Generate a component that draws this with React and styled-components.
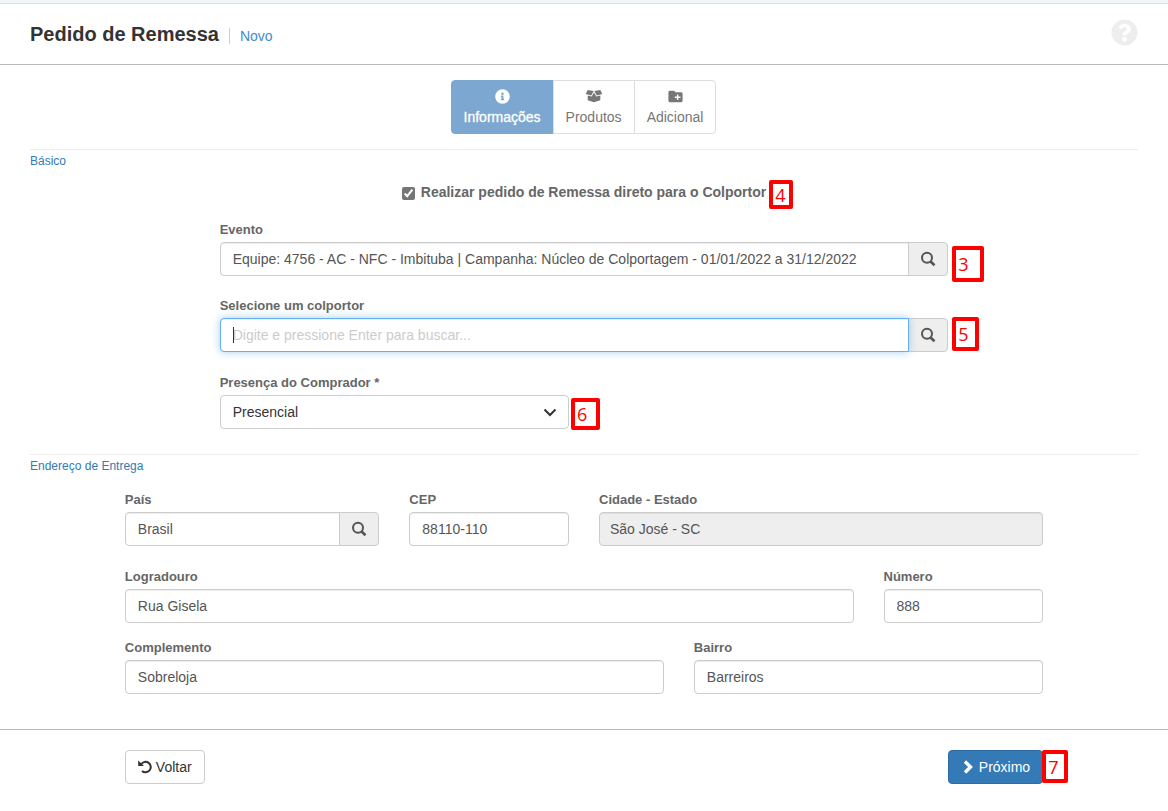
import React, { useState } from 'react';
import styled, { createGlobalStyle, css } from 'styled-components';
import { FaInfoCircle, FaQuestionCircle } from 'react-icons/fa';
import { MdCreateNewFolder } from 'react-icons/md';

const GlobalStyle = createGlobalStyle`
  * {
    box-sizing: border-box;
  }
  body {
    margin: 0;
    background: #fff;
    color: #555;
    font: 14px/20px "Liberation Sans", Arial, sans-serif;
  }
  input, select, button {
    font: inherit;
  }
`;

const Page = styled.div`
  border-top: 3px solid #f2f6f9;
`;

const Header = styled.header`
  display: flex;
  align-items: center;
  height: 62px;
  padding: 0 30px;
  border-top: 1px solid #ddd;
  border-bottom: 1px solid #bbb;
`;

const Title = styled.h1`
  margin: 0;
  color: #333;
  font-size: 20px;
  line-height: 24px;
`;

const SubTitle = styled.a`
  margin: 4px 0 0 10px;
  padding-left: 10px;
  border-left: 1px solid #ccc;
  color: #428bca;
  line-height: 16px;
  text-decoration: none;
`;

const HelpButton = styled.button`
  display: flex;
  margin: 0 0 4px auto;
  padding: 0;
  border: 0;
  background: none;
  color: #eee;
  font-size: 27px;
`;

const Tabs = styled.nav`
  display: flex;
  justify-content: center;
  padding: 15px 0;
`;

const Tab = styled.button`
  display: flex;
  flex-direction: column;
  align-items: center;
  gap: 2px;
  height: 54px;
  margin-left: -1px;
  padding: 6px 12px;
  border: 1px solid #ddd;
  background: #fff;
  color: #777;

  &:first-child {
    border-radius: 4px 0 0 4px;
  }
  &:last-child {
    border-radius: 0 4px 4px 0;
  }
  ${props => props.$active && css`
    border-color: #7ba7d0;
    background: #7ba7d0;
    color: #fff;
    -webkit-text-stroke: 0.3px #fff;
  `}
`;

const TabIcon = styled.span`
  display: flex;
  flex: none;
  align-items: center;
  height: 18px;
`;

const Section = styled.section`
  margin: 0 30px;
  border-top: 1px solid #eee;
`;

const SectionTitle = styled.h2`
  margin: 0;
  color: #337ab7;
  font-size: 12px;
  font-weight: normal;
  line-height: 22px;
`;

const CheckRow = styled.div`
  display: flex;
  justify-content: center;
  margin: 10px 0 17px;
`;

const CheckLabel = styled.label`
  position: relative;
  display: flex;
  align-items: center;
  gap: 6px;
  color: #666;
  font-weight: bold;

  input {
    width: 13px;
    height: 13px;
    margin: 3px 0 0;
    accent-color: #757575;
  }
`;

const Row = styled.div`
  display: grid;
  grid-template-columns: repeat(12, 1fr);
  column-gap: 30px;
  margin-bottom: ${props => props.$gap || 19}px;
`;

const AddressRows = styled.div`
  padding-top: 12px;
`;

const Col = styled.div`
  position: relative;
  grid-column: ${props => props.$start} / span ${props => props.$span};
`;

const Label = styled.label`
  display: block;
  margin-bottom: 1px;
  color: #666;
  font-size: 13px;
  font-weight: bold;
  line-height: 22px;
`;

const Group = styled.div`
  position: relative;
  display: flex;
`;

const control = css`
  width: 100%;
  min-width: 0;
  height: 34px;
  padding: 6px 12px;
  border: 1px solid #ccc;
  border-radius: 4px;
  background: #fff;
  color: #555;
`;

const Input = styled.input`
  ${control}
  box-shadow: inset 0 1px 1px rgba(0, 0, 0, 0.075);

  ${Group} & {
    border-radius: 4px 0 0 4px;
  }
  &::placeholder {
    color: #ccc;
  }
  &:disabled {
    padding-left: 10px;
    background: #eee;
  }
  &:focus {
    z-index: 1;
    border-color: #66afe9;
    outline: 0;
    box-shadow: inset 0 1px 1px rgba(0, 0, 0, 0.075), 0 0 8px rgba(102, 175, 233, 0.6);
  }
`;

const Caret = styled.span`
  position: absolute;
  top: 9px;
  left: 13px;
  z-index: 2;
  width: 1px;
  height: 16px;
  background: #333;
  pointer-events: none;
`;

const SearchButton = styled.button`
  display: flex;
  flex: none;
  align-items: center;
  justify-content: center;
  width: 40px;
  margin-left: -1px;
  padding: 0;
  border: 1px solid #ccc;
  border-radius: 0 4px 4px 0;
  background: #eee;
  color: #555;
`;

const Select = styled.select`
  ${control}
  appearance: none;
  color: #333;
`;

const Arrow = styled.svg`
  position: absolute;
  top: 13px;
  right: 12px;
  pointer-events: none;
`;

const Footer = styled.footer`
  padding: 20px 30px 8px;
  border-top: 1px solid #bbb;
`;

const Actions = styled.div`
  position: relative;
  grid-column: 2 / span 10;
  display: flex;
  justify-content: space-between;
`;

const Button = styled.button`
  display: flex;
  align-items: center;
  gap: 4px;
  height: 34px;
  padding: 6px 12px;
  border: 1px solid ${props => (props.$primary ? '#2e6da4' : '#ccc')};
  border-radius: 4px;
  background: ${props => (props.$primary ? '#337ab7' : '#fff')};
  color: ${props => (props.$primary ? '#fff' : '#333')};
`;

const Marker = styled.span`
  position: absolute;
  top: ${props => props.$top}px;
  left: calc(100% + ${props => props.$left}px);
  display: flex;
  align-items: center;
  width: ${props => props.$width}px;
  height: ${props => props.$height}px;
  padding-left: 2px;
  border: 4px solid #f00;
  border-radius: 2px;
  background: #fff;
  color: #f00;
  font: 400 18px/22px "Open Sans", "Noto Sans", sans-serif;
`;

const BoxIcon = () => (
  <svg width="18" height="14" viewBox="0 0 17 14" fill="currentColor">
    <path d="M2.2 1L8.2 1.9L5.7 6.6L0.2 5.1Z" />
    <path d="M14.8 1L8.8 1.9L11.3 6.6L16.8 5.1Z" />
    <path d="M2.2 6.5L6.2 7.6L8.5 3.4L10.8 7.6L14.8 6.5V11.3L8.5 13.2L2.2 11.3Z" />
  </svg>
);

const SearchIcon = () => (
  <svg width="16" height="16" viewBox="0 0 16 16" fill="none" stroke="currentColor">
    <circle cx="7" cy="6.7" r="5" strokeWidth="2" />
    <path d="M10.3 10.2L14.5 14.2" strokeWidth="2.6" />
  </svg>
);

const SearchField = ({ id, label, marker, caret, ...rest }) => {
  const [value, setValue] = useState(rest.defaultValue || '');
  const [focused, setFocused] = useState(!!rest.autoFocus);

  return (
    <>
      <Label htmlFor={id}>{label}</Label>
      <Group>
        <Input
          id={id}
          {...rest}
          style={caret && !value ? { caretColor: 'transparent' } : undefined}
          onChange={evt => setValue(evt.target.value)}
          onFocus={() => setFocused(true)}
          onBlur={() => setFocused(false)}
        />
        {caret && focused && !value && <Caret />}
        <SearchButton type="button" aria-label={`Buscar ${label}`}>
          <SearchIcon />
        </SearchButton>
        {marker}
      </Group>
    </>
  );
};

const Field = ({ id, label, ...rest }) => (
  <>
    <Label htmlFor={id}>{label}</Label>
    <Input id={id} {...rest} />
  </>
);

const TABS = [
  { name: 'Informações', icon: <FaInfoCircle size={15} /> },
  { name: 'Produtos', icon: <BoxIcon /> },
  { name: 'Adicional', icon: <MdCreateNewFolder size={17} /> },
];

function App() {
  const [tab, setTab] = useState('Informações');

  return (
    <Page>
      <GlobalStyle />
      <Header>
        <Title>Pedido de Remessa</Title>
        <SubTitle href="#novo">Novo</SubTitle>
        <HelpButton type="button" aria-label="Ajuda">
          <FaQuestionCircle />
        </HelpButton>
      </Header>
      <Tabs>
        {TABS.map(({ name, icon }) => (
          <Tab key={name} type="button" $active={tab === name} onClick={() => setTab(name)}>
            <TabIcon>{icon}</TabIcon>
            {name}
          </Tab>
        ))}
      </Tabs>

      <Section>
        <SectionTitle>Básico</SectionTitle>
        <CheckRow>
          <CheckLabel>
            <input type="checkbox" defaultChecked />
            Realizar pedido de Remessa direto para o Colportor
            <Marker $top={-2} $left={3} $width={24} $height={29}>4</Marker>
          </CheckLabel>
        </CheckRow>
        <Row>
          <Col $start={3} $span={8}>
            <SearchField
              id="evento"
              label="Evento"
              defaultValue="Equipe: 4756 - AC - NFC - Imbituba | Campanha: Núcleo de Colportagem - 01/01/2022 a 31/12/2022"
              marker={<Marker $top={4} $left={4} $width={32} $height={36}>3</Marker>}
            />
          </Col>
        </Row>
        <Row $gap={20}>
          <Col $start={3} $span={8}>
            <SearchField
              id="colportor"
              label="Selecione um colportor"
              placeholder="Digite e pressione Enter para buscar..."
              autoFocus
              caret
              marker={<Marker $top={-1} $left={4} $width={27} $height={34}>5</Marker>}
            />
          </Col>
        </Row>
        <Row $gap={25}>
          <Col $start={3} $span={4}>
            <Label htmlFor="presenca">Presença do Comprador *</Label>
            <Group>
              <Select id="presenca">
                <option>Presencial</option>
              </Select>
              <Arrow width="14" height="9" fill="none" stroke="#333" strokeWidth="2">
                <path d="M1.5 1.5L7 7L12.5 1.5" />
              </Arrow>
              <Marker $top={3} $left={2} $width={29} $height={32}>6</Marker>
            </Group>
          </Col>
        </Row>
      </Section>

      <Section>
        <SectionTitle>Endereço de Entrega</SectionTitle>
        <AddressRows>
          <Row $gap={20}>
            <Col $start={2} $span={3}>
              <SearchField id="pais" label="País" defaultValue="Brasil" />
            </Col>
            <Col $start={5} $span={2}>
              <Field id="cep" label="CEP" defaultValue="88110-110" />
            </Col>
            <Col $start={7} $span={5}>
              <Field id="cidade" label="Cidade - Estado" defaultValue="São José - SC" disabled />
            </Col>
          </Row>
          <Row $gap={14}>
            <Col $start={2} $span={8}>
              <Field id="logradouro" label="Logradouro" defaultValue="Rua Gisela" />
            </Col>
            <Col $start={10} $span={2}>
              <Field id="numero" label="Número" defaultValue="888" />
            </Col>
          </Row>
          <Row $gap={35}>
            <Col $start={2} $span={6}>
              <Field id="complemento" label="Complemento" defaultValue="Sobreloja" />
            </Col>
            <Col $start={8} $span={4}>
              <Field id="bairro" label="Bairro" defaultValue="Barreiros" />
            </Col>
          </Row>
        </AddressRows>
      </Section>

      <Footer>
        <Row>
          <Actions>
            <Button type="button">
              <svg width="14" height="14" viewBox="0 0 14 14" fill="none" stroke="currentColor">
                <path d="M3.2 4.2A5.2 5.2 0 1 1 4 10.9" strokeWidth="2" />
                <path d="M0.2 0.4V6.1H6Z" fill="currentColor" stroke="none" />
              </svg>
              Voltar
            </Button>
            <Button type="button" $primary>
              <svg width="14" height="14" viewBox="0 0 14 14" fill="none" stroke="currentColor">
                <path d="M4 1.5L9.5 7L4 12.5" strokeWidth="3.4" />
              </svg>
              Próximo
            </Button>
            <Marker $top={0} $left={-1} $width={26} $height={33}>7</Marker>
          </Actions>
        </Row>
      </Footer>
    </Page>
  );
}

export default App;
